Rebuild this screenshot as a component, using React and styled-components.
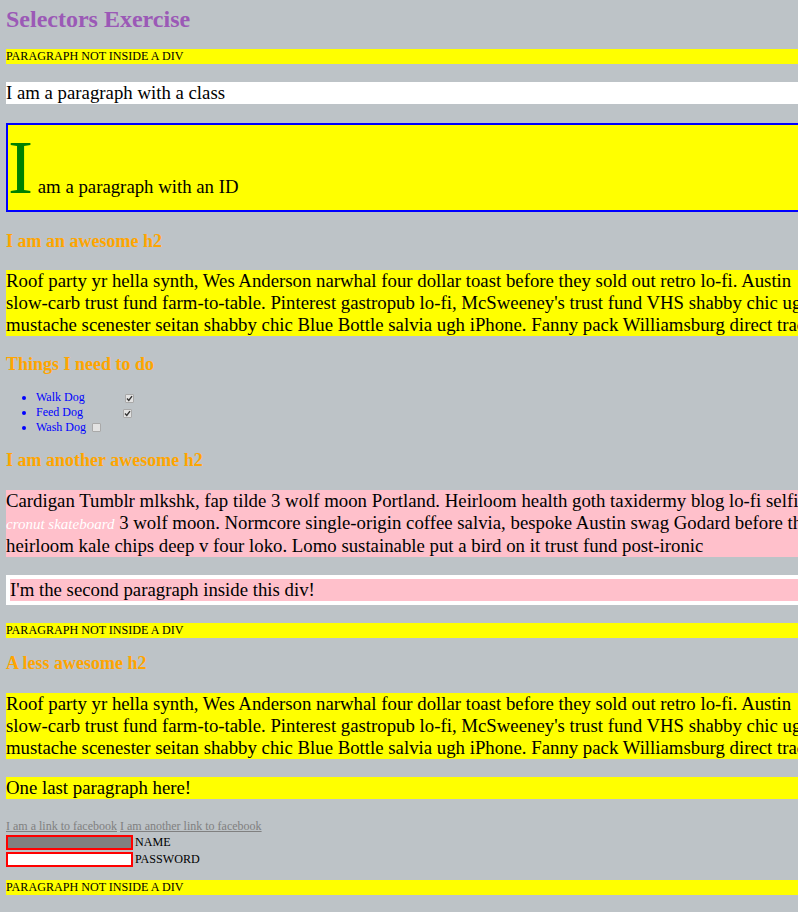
import React from 'react';
import styled, { createGlobalStyle } from 'styled-components';

const GlobalStyle = createGlobalStyle`
  html {
    background: #bdc3c7;
    overflow-x: hidden;
  }
  body {
    margin: 0;
    background: #bdc3c7;
    font-family: "Liberation Serif", "Times New Roman", serif;
    color: #000;
  }
`;

const Page = styled.div`
  width: 1300px;
  padding: 6px 6px 0;
`;

const Title = styled.h1`
  margin: 0 0 16px;
  font-size: 24px;
  font-weight: bold;
  color: #9b59b6;
`;

const Notice = styled.p`
  margin: 12px 0;
  font-size: 12.1px;
  line-height: 15px;
  background: #ffff00;
`;

const Para = styled.p`
  margin: 18.4px 0;
  font-size: 18.8px;
  line-height: 22px;
  background: ${(p) => p.$bg || '#ffff00'};
`;

const IdPara = styled(Para)`
  line-height: normal;
  border: 2px solid #0000ff;

  &::first-letter {
    font-size: 4em;
    line-height: 1.135;
    color: #008000;
  }
`;

const Heading = styled.h2`
  margin: 15px 0;
  font-size: 18px;
  font-weight: bold;
  color: #ffa500;
`;

const TodoList = styled.ul`
  margin: 12px 0;
  padding-left: 30px;
  font-size: 12px;
  color: #0000ff;
`;

const TodoItem = styled.li`
  line-height: 15px;
`;

const Check = styled.span`
  display: inline-flex;
  align-items: center;
  justify-content: center;
  width: 9px;
  height: 9px;
  margin-left: ${(p) => (p.$checked ? '40px' : '6px')};
  vertical-align: -1px;
  box-sizing: border-box;
  border: 1px solid #a9a9a9;
  border-radius: 1px;
  background: #e3e3e3;
`;

const PinkBox = styled.div`
  margin: 0;
`;

const PinkPara = styled(Para)`
  background: #ffc0cb;
  border: ${(p) => (p.$framed ? '4px solid #ffffff' : 'none')};
`;

const Cronut = styled.em`
  color: #ffffff;
  font-size: 15px;
`;

const LinkRow = styled.p`
  margin: 19.5px 0 0;
  font-size: 12px;
  line-height: 15px;
`;

const FbLink = styled.a`
  color: #808080;
  text-decoration: underline;
`;

const FieldRow = styled.div`
  display: flex;
  align-items: center;
  gap: 2px;
  font-size: 12.1px;
  height: 17px;
`;

const Field = styled.input`
  width: 127px;
  height: 15px;
  box-sizing: border-box;
  margin: 0;
  padding: 0;
  border: 2px solid #ff0000;
  background: ${(p) => p.$bg};
`;

const CheckMark = () => (
  <svg width="7" height="7" viewBox="0 0 7 7">
    <path d="M1 3.6 L2.8 5.4 L6 1.2" fill="none" stroke="#333" strokeWidth="1.4" />
  </svg>
);

const todos = [
  { label: 'Walk Dog', done: true },
  { label: 'Feed Dog', done: true },
  { label: 'Wash Dog', done: false },
];

const roof = (
  <>
    Roof party yr hella synth, Wes Anderson narwhal four dollar toast before they sold out retro lo-fi. Austin
    <br />
    slow-carb trust fund farm-to-table. Pinterest gastropub lo-fi, McSweeney's trust fund VHS shabby chic ugh
    kale chips
    <br />
    mustache scenester seitan shabby chic Blue Bottle salvia ugh iPhone. Fanny pack Williamsburg direct trade
    tofu.
  </>
);

export default function App() {
  return (
    <>
      <GlobalStyle />
      <Page>
        <Title>Selectors Exercise</Title>
        <Notice>PARAGRAPH NOT INSIDE A DIV</Notice>
        <Para $bg="#ffffff">I am a paragraph with a class</Para>
        <IdPara>I am a paragraph with an ID</IdPara>

        <Heading>I am an awesome h2</Heading>
        <Para>{roof}</Para>

        <Heading>Things I need to do</Heading>
        <TodoList>
          {todos.map((t) => (
            <TodoItem key={t.label}>
              {t.label}
              <Check $checked={t.done}>{t.done && <CheckMark />}</Check>
            </TodoItem>
          ))}
        </TodoList>

        <Heading>I am another awesome h2</Heading>
        <PinkBox>
          <PinkPara>
            Cardigan Tumblr mlkshk, fap tilde 3 wolf moon Portland. Heirloom health goth taxidermy blog lo-fi selfies
            <br />
            <Cronut>cronut skateboard</Cronut> 3 wolf moon. Normcore single-origin coffee salvia, bespoke Austin swag
            Godard before they sold out
            <br />
            heirloom kale chips deep v four loko. Lomo sustainable put a bird on it trust fund post-ironic
          </PinkPara>
          <PinkPara $framed>I'm the second paragraph inside this div!</PinkPara>
        </PinkBox>
        <Notice>PARAGRAPH NOT INSIDE A DIV</Notice>

        <Heading>A less awesome h2</Heading>
        <Para>{roof}</Para>
        <Para>One last paragraph here!</Para>

        <LinkRow>
          <FbLink href="#">I am a link to facebook</FbLink> <FbLink href="#">I am another link to facebook</FbLink>
        </LinkRow>
        <FieldRow>
          <Field type="text" $bg="#808080" />
          NAME
        </FieldRow>
        <FieldRow>
          <Field type="password" $bg="#ffffff" />
          PASSWORD
        </FieldRow>
        <Notice>PARAGRAPH NOT INSIDE A DIV</Notice>
      </Page>
    </>
  );
}
